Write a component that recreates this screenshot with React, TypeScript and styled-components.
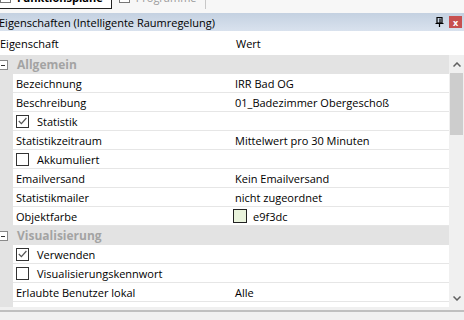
import styled, { createGlobalStyle } from "styled-components";

const Global = createGlobalStyle`
    body {
        margin: 0;
        background: #f0f0f0;
        font-family: "Open Sans", "Noto Sans", sans-serif;
        font-size: 11px;
        color: #000;
        overflow: hidden;
    }
`

const Fenster = styled.div`
    width: 464px;
    height: 320px;
    display: flex;
    flex-direction: column;
    background: #f0f0f0;
    overflow: hidden;
`

const Reiterleiste = styled.div`
    height: 9px;
    padding-bottom: 4px;
    background: #f7f7f7;
    display: flex;
    align-items: flex-end;
    overflow: hidden;
`

const Reiter = styled.div<{ $aktiv?: boolean }>`
    height: 20px;
    display: flex;
    align-items: center;
    gap: 6px;
    padding: 0 8px 3px 0;
    box-sizing: border-box;
    background: ${p => p.$aktiv ? "#fff" : "transparent"};
    border-right: 1px solid ${p => p.$aktiv ? "#222" : "#c8c8c8"};
    border-bottom: ${p => p.$aktiv ? "1px solid #222" : "none"};
    color: ${p => p.$aktiv ? "#000" : "#9a9a9a"};
    font-weight: ${p => p.$aktiv ? 700 : 400};
    font-size: 11px;
    margin-right: 6px;
    padding-left: ${p => p.$aktiv ? "0" : "1px"};
`

const ReiterIcon = styled.span`
    width: 9px;
    height: 9px;
    border: 1px solid #777;
    background: #fff;
`

const Titelleiste = styled.div`
    height: 18px;
    display: flex;
    align-items: center;
    background: linear-gradient(#c4d1e1, #d9e2ee);
    padding-right: 2px;
`

const Titel = styled.span`
    flex: 1;
    margin-left: -1px;
    font-size: 11px;
`

const Pin = styled.svg`
    width: 9px;
    height: 10px;
    margin-right: 5px;
`

const Schliessen = styled.div`
    width: 13px;
    height: 12px;
    background: #c75050;
    color: #fff;
    font-size: 9px;
    font-weight: 700;
    display: flex;
    align-items: center;
    justify-content: center;
    line-height: 1;
`

const Spaltenkopf = styled.div`
    height: 24px;
    display: grid;
    grid-template-columns: 232px 1fr;
    align-items: center;
    background: #fff;
    font-size: 11px;
`

const KopfText = styled.span<{ $links: number }>`
    padding-left: ${p => p.$links}px;
`

const Rumpf = styled.div`
    height: 252px;
    display: flex;
    background: #fff;
`

const Liste = styled.div`
    width: 449px;
    display: flex;
    flex-direction: column;
    background: linear-gradient(90deg, #e3e3e3 13px, #fff 13px);
`

const Gruppe = styled.div`
    height: 19px;
    flex: none;
    display: flex;
    align-items: center;
    background: #e3e3e3;
    color: #a3a3a3;
    font-weight: 700;
    font-size: 12px;
`

const Minus = styled.span`
    width: 8px;
    height: 8px;
    margin-left: -2px;
    margin-right: 9px;
    border: 1px solid #8a8a8a;
    background: #fff;
    position: relative;
    &::after {
        content: "";
        position: absolute;
        left: 2px;
        right: 2px;
        top: 4px;
        height: 1px;
        background: #333;
    }
`

const Zeile = styled.div`
    height: 19px;
    flex: none;
    box-sizing: border-box;
    margin-left: 13px;
    display: grid;
    grid-template-columns: 219px 1fr;
    border-bottom: 1px solid #e6e6e6;
    background: #fff;
`

const Zelle = styled.div<{ $links: number; $abstand: number }>`
    display: flex;
    align-items: center;
    gap: ${p => p.$abstand}px;
    padding-left: ${p => p.$links}px;
    white-space: nowrap;
    overflow: hidden;
    font-size: 11px;
`

const Kasten = styled.span`
    width: 11px;
    height: 11px;
    flex: none;
    border: 1px solid #333;
    background: #fff;
    display: flex;
    align-items: center;
    justify-content: center;
`

const Farbfeld = styled.span<{ $farbe: string }>`
    width: 12px;
    height: 12px;
    flex: none;
    border: 1px solid #222;
    background: ${p => p.$farbe};
`

const Rest = styled.div`
    flex: 1;
    margin-left: 13px;
    background: #fff;
`

const Rollbalken = styled.div`
    width: 15px;
    display: flex;
    flex-direction: column;
    background: #f0f0f0;
`

const Pfeil = styled.div`
    height: 18px;
    display: flex;
    align-items: center;
    justify-content: center;
`

const Daumen = styled.div`
    height: 62px;
    margin: 0 1px;
    background: #cdcdcd;
`

const Luecke = styled.div`
    flex: 1;
`

const Fuss = styled.div`
    margin-top: 3px;
    border-top: 2px solid #bfbfbf;
    flex: 1;
    background: #f0f0f0;
`

const Haken = () => (
    <svg width="9" height="8" viewBox="0 0 9 8">
        <path d="M0.8 4 L3.4 6.6 L8.4 1" fill="none" stroke="#555" strokeWidth="1.2" />
    </svg>
)

type Eintrag =
    | { art: "gruppe"; name: string }
    | { art: "zeile"; name: string; wert?: string; haken?: boolean; farbe?: string }

const eintraege: Eintrag[] = [
    { art: "gruppe", name: "Allgemein" },
    { art: "zeile", name: "Bezeichnung", wert: "IRR Bad OG" },
    { art: "zeile", name: "Beschreibung", wert: "01_Badezimmer Obergeschoß" },
    { art: "zeile", name: "Statistik", haken: true },
    { art: "zeile", name: "Statistikzeitraum", wert: "Mittelwert pro 30 Minuten" },
    { art: "zeile", name: "Akkumuliert", haken: false },
    { art: "zeile", name: "Emailversand", wert: "Kein Emailversand" },
    { art: "zeile", name: "Statistikmailer", wert: "nicht zugeordnet" },
    { art: "zeile", name: "Objektfarbe", wert: "e9f3dc", farbe: "#e9f3dc" },
    { art: "gruppe", name: "Visualisierung" },
    { art: "zeile", name: "Verwenden", haken: true },
    { art: "zeile", name: "Visualisierungskennwort", haken: false },
    { art: "zeile", name: "Erlaubte Benutzer lokal", wert: "Alle" },
]

const App = () => {
    return (
        <>
            <Global />
            <Fenster>
                <Reiterleiste>
                    <Reiter $aktiv>
                        <ReiterIcon />
                        Funktionspläne
                    </Reiter>
                    <Reiter>
                        <ReiterIcon />
                        Programme
                    </Reiter>
                </Reiterleiste>

                <Titelleiste>
                    <Titel>Eigenschaften (Intelligente Raumregelung)</Titel>
                    <Pin viewBox="0 0 9 10">
                        <path d="M2 0.5 H7 V6 H2 Z M5 1.5 V5.5 M0.5 6.5 H8.5 M4.5 6.5 V10" fill="none" stroke="#000" strokeWidth="1.2" />
                    </Pin>
                    <Schliessen>x</Schliessen>
                </Titelleiste>

                <Spaltenkopf>
                    <KopfText $links={0}>Eigenschaft</KopfText>
                    <KopfText $links={4}>Wert</KopfText>
                </Spaltenkopf>

                <Rumpf>
                    <Liste>
                        {eintraege.map(e =>
                            e.art === "gruppe" ? (
                                <Gruppe key={e.name}>
                                    <Minus />
                                    {e.name}
                                </Gruppe>
                            ) : (
                                <Zeile key={e.name}>
                                    <Zelle $links={3} $abstand={8}>
                                        {e.haken !== undefined && (
                                            <Kasten>{e.haken && <Haken />}</Kasten>
                                        )}
                                        {e.name}
                                    </Zelle>
                                    <Zelle $links={e.farbe ? 1 : 3} $abstand={6}>
                                        {e.farbe && <Farbfeld $farbe={e.farbe} />}
                                        {e.wert}
                                    </Zelle>
                                </Zeile>
                            )
                        )}
                        <Rest />
                    </Liste>
                    <Rollbalken>
                        <Pfeil>
                            <svg width="8" height="5" viewBox="0 0 8 5">
                                <path d="M0.5 4.5 L4 1 L7.5 4.5" fill="none" stroke="#606060" strokeWidth="1.5" />
                            </svg>
                        </Pfeil>
                        <Daumen />
                        <Luecke />
                        <Pfeil>
                            <svg width="8" height="5" viewBox="0 0 8 5">
                                <path d="M0.5 0.5 L4 4 L7.5 0.5" fill="none" stroke="#606060" strokeWidth="1.5" />
                            </svg>
                        </Pfeil>
                    </Rollbalken>
                </Rumpf>

                <Fuss />
            </Fenster>
        </>
    )
}

export default App
